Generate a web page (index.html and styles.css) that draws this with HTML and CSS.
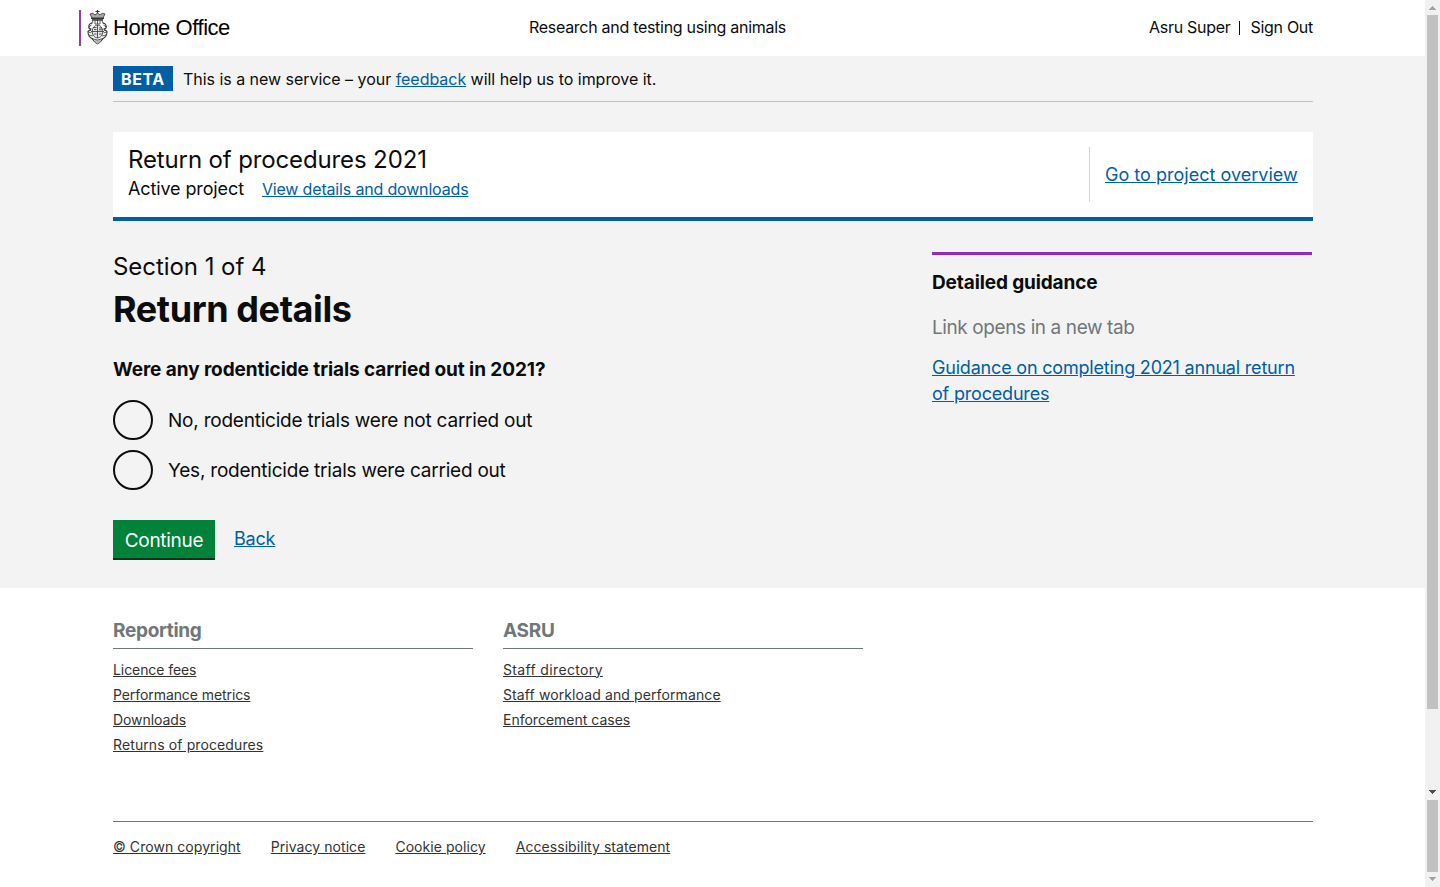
FILE: index.html
```html
<!DOCTYPE html>
<html lang="en">
<head>
<meta charset="utf-8">
<title>Return of procedures 2021</title>
<link rel="stylesheet" href="styles.css">
</head>
<body>
<div class="page">
<header class="header">
  <div class="brand">
    <svg class="crest" width="21" height="36" viewBox="0 0 21 36" fill="none" stroke="#333" stroke-width=".8">
      <path d="M10.500 0v4M8.500 1.500h4" stroke-width="1.200"/>
      <path d="M3 4q3-2 5 1l2.500-2 2.500 2q2-3 5-1l-2.500 5h-10z" fill="#aaa"/>
      <path d="M4 8.200h13M5 10h11" stroke-width="1.400"/>
      <path d="M6 11l-1.500 3M15 11l1.500 3M8 11v3h5v-3M10.500 10v4"/>
      <ellipse cx="10.500" cy="21.500" rx="5.300" ry="6.500" fill="#e4e4e4"/>
      <path d="M10.500 15v13M5 21.500h11M6.500 17.500h3M7 19.500h2.500M12 18h3M12 19.800h3M7 24h2.500M12 24h2.500"/>
      <path d="M5 13Q1 14 2 18l2 1-3 2.500q0 5 4 7l2 2M16 13q4 1 3 5l-2 1 3 2.500q0 5-4 7l-2 2" fill="none" stroke-width="1.100"/>
      <path d="M1.500 17l3-2M1.500 22l3 1M2 25l4 1M19.500 17l-3-2M19.500 22l-3 1M19 25l-4 1M3 20l2 2M18 20l-2 2"/>
      <path d="M5 28.500q5.500 3 11 0l-2.500 3.500-3 2-3-2z" fill="#bbb"/>
    </svg>
    <span class="brand-name">Home Office</span>
  </div>
  <div class="service">Research and testing using animals</div>
  <div class="user"><span>Asru Super</span><span class="divider"></span><span>Sign Out</span></div>
</header>
<main class="main">
  <div class="container">
    <div class="phase"><strong class="tag">BETA</strong><span class="phase-text">This is a new service – your <a href="#">feedback</a> will help us to improve it.</span></div>
    <section class="banner">
      <div>
        <h2 class="banner-title">Return of procedures 2021</h2>
        <div class="banner-meta"><span class="status">Active project</span><a class="details" href="#">View details and downloads</a></div>
      </div>
      <div class="banner-link"><a href="#">Go to project overview</a></div>
    </section>
    <div class="columns">
      <form class="form">
        <div class="section">Section 1 of 4</div>
        <h1 class="title">Return details</h1>
        <h3 class="question">Were any rodenticide trials carried out in 2021?</h3>
        <label class="radio"><span class="dot"></span><span>No, rodenticide trials were not carried out</span></label>
        <label class="radio"><span class="dot"></span><span>Yes, rodenticide trials were carried out</span></label>
        <div class="actions"><button class="button" type="button">Continue</button><a class="back" href="#">Back</a></div>
      </form>
      <aside class="guidance">
        <h3 class="guidance-title">Detailed guidance</h3>
        <p class="hint">Link opens in a new tab</p>
        <a class="guide-link" href="#">Guidance on completing 2021 annual return of procedures</a>
      </aside>
    </div>
  </div>
</main>
<footer class="footer container">
  <div class="footer-columns">
    <nav class="footer-nav reporting"><h3>Reporting</h3><a href="#">Licence fees</a><a href="#">Performance metrics</a><a href="#">Downloads</a><a class="loose" href="#">Returns of procedures</a></nav>
    <nav class="footer-nav"><h3>ASRU</h3><a class="looser" href="#">Staff directory</a><a class="loose" href="#">Staff workload and performance</a><a href="#">Enforcement cases</a></nav>
  </div>
  <div class="legal"><a href="#">© Crown copyright</a><a href="#">Privacy notice</a><a href="#">Cookie policy</a><a href="#">Accessibility statement</a></div>
</footer>
</div>
<div class="scrollbar">
  <svg width="15" height="15" fill="#a3a3a3" shape-rendering="crispEdges"><path d="M3.500 10L7.500 6l4 4z"/></svg>
  <div class="thumb thumb-page"></div>
  <svg class="arrow-mid" width="15" height="15" fill="#505050" shape-rendering="crispEdges"><path d="M3.500 5L7.500 9l4-4z"/></svg>
  <div class="thumb thumb-outer"></div>
  <svg width="15" height="15" fill="#a3a3a3" shape-rendering="crispEdges"><path d="M3.500 5L7.500 9l4-4z"/></svg>
</div>
</body>
</html>
```
FILE: styles.css
```css
* { box-sizing: border-box; }
body { margin: 0; height: 887px; overflow: hidden; display: flex; background: #fff; color: #0b0c0c; font-family: Inter, sans-serif; font-size: 16px; }
h1, h2, h3, p { margin: 0; }
a { color: #005ea5; text-decoration: underline; }
.page { width: 1425px; }
.container { width: 1200px; margin: 0 auto 0 113px; }
.header { height: 56px; display: grid; grid-template-columns: 450px 1fr auto; padding: 0 112px 0 79px; line-height: 20px; }
.brand { display: flex; height: 36px; margin-top: 10px; border-left: 2px solid #8f3fae; padding-left: 6px; }
.brand-name { margin-left: 5px; font: 22px/35px "Liberation Sans", sans-serif; color: #000; white-space: nowrap; letter-spacing: -0.45px; }
.service, .user { padding-top: 17px; letter-spacing: -0.29px; }
.user { display: flex; }
.divider { width: 1px; height: 14px; margin: 4px 10px 0 9px; background: #0b0c0c; }
.main { height: 532px; background: #f3f3f3; }
.phase { height: 46px; display: flex; gap: 10px; padding-top: 10px; border-bottom: 1px solid #bfc1c3; }
.tag { height: 25px; width: 60px; background: #005ea5; color: #fff; padding-left: 8px; line-height: 27px; letter-spacing: 0.6px; }
.phase-text { line-height: 27px; letter-spacing: -0.035px; }
.banner { margin-top: 30px; height: 89px; padding: 15px; display: flex; justify-content: space-between; background: #fff; border-bottom: 4px solid #005ea5; }
.banner-title { font-size: 24px; font-weight: 400; line-height: 26px; letter-spacing: -0.13px; }
.banner-meta { display: flex; gap: 18px; line-height: 32px; }
.status { font-size: 18px; letter-spacing: -0.12px; }
.details { letter-spacing: -0.17px; }
.banner-link { width: 209px; height: 55px; border-left: 1px solid #d4d6d8; padding-left: 15px; line-height: 56px; font-size: 18px; letter-spacing: 0.02px; }
.columns { display: flex; justify-content: space-between; padding: 31px 1px 0 0; }
.form { width: 780px; }
.section { font-size: 24px; line-height: 30px; letter-spacing: -0.05px; }
.title { font-size: 36px; line-height: 54px; letter-spacing: -0.4px; }
.question { font-size: 19px; line-height: 26px; margin: 21px 0 17px; letter-spacing: -0.08px; }
.radio { display: flex; gap: 15px; height: 40px; margin-bottom: 10px; font-size: 19px; line-height: 41px; letter-spacing: -0.22px; }
.dot { width: 40px; height: 40px; border: 2px solid #0b0c0c; border-radius: 50%; }
.actions { display: flex; gap: 19px; margin-top: 30px; }
.button { width: 102px; height: 40px; padding: 2px 0 0; border: 0; border-bottom: 2px solid #003618; background: #00823b; color: #fff; font: 19px/38px Inter, sans-serif; letter-spacing: -0.3px; }
.back { font-size: 18px; line-height: 38px; letter-spacing: -0.2px; }
.guidance { width: 380px; border-top: 3px solid #912db6; padding-top: 15px; }
.guidance-title { font-size: 19px; line-height: 26px; letter-spacing: -0.12px; }
.hint { margin: 19px 0 14px; font-size: 19px; line-height: 26px; color: #6f777b; letter-spacing: -0.4px; }
.guide-link { display: block; font-size: 18px; line-height: 26px; letter-spacing: -0.19px; }
.footer-columns { height: 233px; display: flex; gap: 30px; padding-top: 30px; }
.footer-nav { width: 360px; display: flex; flex-direction: column; align-items: flex-start; font-size: 14px; line-height: 25.200px; }
.footer-nav h3 { width: 100%; height: 31px; margin-bottom: 7.500px; border-bottom: 1px solid #6f777b; color: #6f777b; font-size: 19px; line-height: 25px; letter-spacing: -0.3px; }
.reporting { letter-spacing: -0.08px; }
.footer a { color: #333; }
.footer .loose { letter-spacing: 0.11px; }
.footer .looser { letter-spacing: 0.35px; }
.legal { display: flex; gap: 30px; border-top: 1px solid #6f777b; padding-top: 13px; font-size: 14px; line-height: 24px; letter-spacing: 0.06px; }
.scrollbar { width: 15px; background: #f1f1f1; display: flex; flex-direction: column; }
.scrollbar svg { display: block; flex: none; }
.thumb { width: 11px; margin-left: 2px; background: #c1c1c1; }
.thumb-page { height: 694px; }
.arrow-mid { margin-top: 76px; }
.thumb-outer { height: 72px; }
```
